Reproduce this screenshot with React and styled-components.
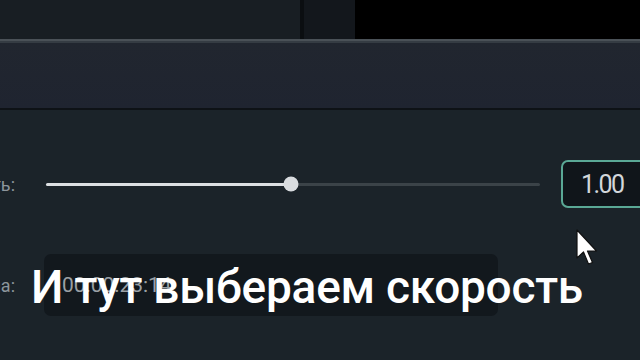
import React from "react";
import styled, { createGlobalStyle } from "styled-components";

const Global = createGlobalStyle`
  html, body { margin: 0; padding: 0; background: #1b2329; }
  body { width: 640px; height: 360px; overflow: hidden; font-family: Roboto, "Liberation Sans", sans-serif; }
`;

const Page = styled.div`
  position: relative;
  width: 640px;
  height: 360px;
  display: flex;
  flex-direction: column;
  overflow: hidden;
  background: #1b2329;
`;

const TopBar = styled.div`
  display: flex;
  height: 39px;
  flex: none;
`;

const Pane = styled.div`
  width: ${(p) => (p.$w ? `${p.$w}px` : "auto")};
  flex: ${(p) => (p.$w ? "none" : "1")};
  background: ${(p) => p.$bg};
`;

const Rule = styled.div`
  flex: none;
  height: ${(p) => p.$h}px;
  background: ${(p) => p.$bg};
`;

const Header = styled.div`
  flex: none;
  height: 65px;
  background: linear-gradient(#21262f, #1f2430);
`;

const Body = styled.div`
  flex: 1;
  display: flex;
  flex-direction: column;
  padding-top: 50px;
  gap: 46px;
  background: #1b2329;
`;

const Row = styled.div`
  display: flex;
  align-items: center;
  height: ${(p) => p.$h}px;
`;

const Label = styled.div`
  width: 15px;
  flex: none;
  display: flex;
  justify-content: flex-end;
  overflow: hidden;
  white-space: nowrap;
  color: #8d969c;
  font-size: 18px;
  margin-right: ${(p) => p.$gap}px;
`;

const Track = styled.div`
  position: relative;
  width: 494px;
  flex: none;
  height: 3px;
  border-radius: 2px;
  background: #3b4348;
  margin-right: 21px;
`;

const Fill = styled.div`
  height: 100%;
  border-radius: 2px;
  background: #dcdfe2;
`;

const Thumb = styled.div`
  position: absolute;
  top: 50%;
  width: 15px;
  height: 15px;
  border-radius: 50%;
  background: #d9dcdf;
  transform: translate(-50%, -50%);
`;

const NumberBox = styled.div`
  flex: none;
  box-sizing: border-box;
  width: 100px;
  height: 48px;
  border: 2px solid #5aa895;
  border-radius: 7px;
  background: #10151a;
  display: flex;
  align-items: center;
  padding-left: 18px;
  color: #d3d7db;
  font-size: 25px;
  letter-spacing: -1.6px;
`;

const TimeBox = styled.div`
  flex: none;
  box-sizing: border-box;
  width: 454px;
  height: 62px;
  border-radius: 7px;
  background: #12181d;
  display: flex;
  align-items: center;
  padding-left: 18px;
  color: #9aa0a5;
  font-size: 21px;
`;

const Subtitle = styled.div`
  position: absolute;
  left: 31px;
  top: 264px;
  font-family: Roboto, "Liberation Sans", sans-serif;
  font-weight: 500;
  font-size: 46px;
  line-height: 46px;
  letter-spacing: -0.25px;
  color: #ffffff;
  white-space: nowrap;
`;

const Cursor = styled.svg`
  position: absolute;
  left: 575px;
  top: 229px;
`;

export default function App() {
  const value = 0.496;
  return (
    <Page>
      <Global />
      <TopBar>
        <Pane $w={300} $bg="#181e23" />
        <Pane $w={4} $bg="#0b0e11" />
        <Pane $w={51} $bg="#13171c" />
        <Pane $bg="#000000" />
      </TopBar>
      <Rule $h={2} $bg="#4a5157" />
      <Rule $h={2} $bg="#353c43" />
      <Header />
      <Rule $h={2} $bg="#0e1216" />
      <Body>
        <Row $h={48}>
          <Label $gap={31}>Скорость:</Label>
          <Track>
            <Fill style={{ width: `${value * 100}%` }} />
            <Thumb style={{ left: `${value * 100}%` }} />
          </Track>
          <NumberBox>1.00</NumberBox>
        </Row>
        <Row $h={62}>
          <Label $gap={29}>Длина:</Label>
          <TimeBox>00:00:23:14</TimeBox>
        </Row>
      </Body>
      <Subtitle>И тут выбераем скорость</Subtitle>
      <Cursor width="26" height="40" viewBox="0 0 26 40">
        <path
          d="M2 1 L2 29 L8.5 23 L13.5 35 L17.5 33.5 L12.5 22 L21.5 22 Z"
          fill="#ffffff"
          stroke="#111"
          strokeWidth="1.2"
          strokeLinejoin="round"
        />
      </Cursor>
    </Page>
  );
}
